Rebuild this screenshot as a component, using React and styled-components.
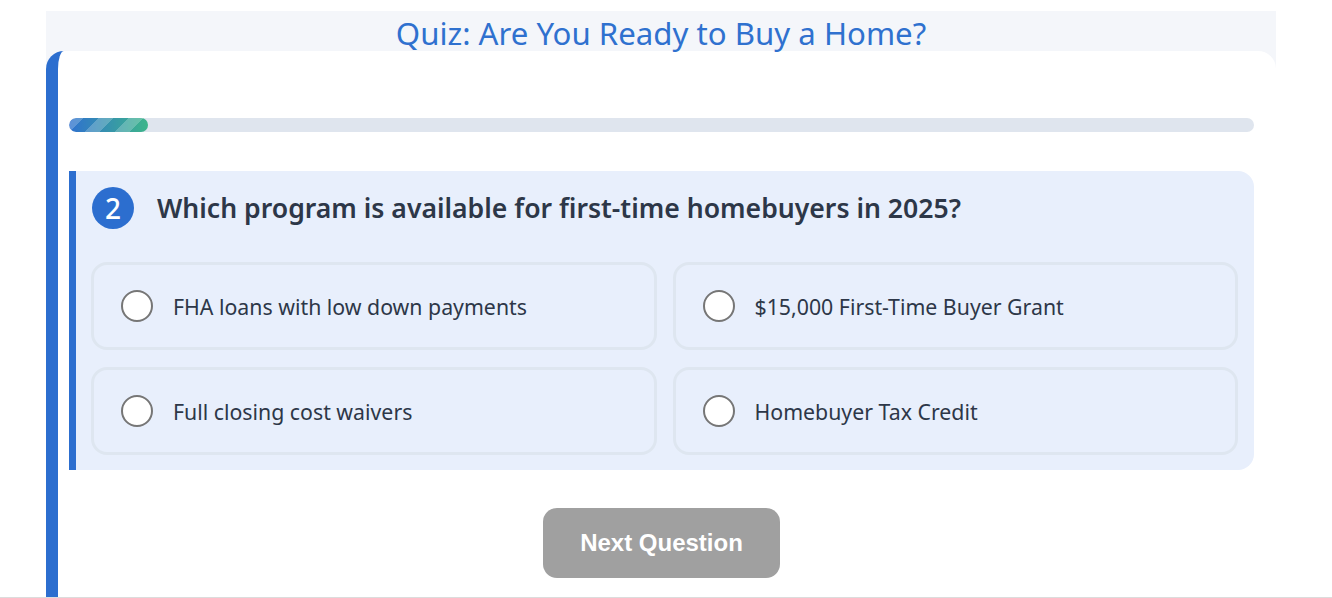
import React from "react";
import styled, { createGlobalStyle } from "styled-components";

const Global = createGlobalStyle`
  html, body { margin: 0; padding: 0; background: #ffffff; }
  body { font-family: "Noto Sans", "Open Sans", sans-serif; overflow: hidden; }
  #root {
    width: 1332px;
    height: 598px;
    border-bottom: 1px solid #dcdcdc;
    box-sizing: border-box;
    overflow: hidden;
    display: flex;
    flex-direction: column;
  }
`;

const Outer = styled.div`
  flex: 1;
  min-height: 0;
  margin: 11px 56px 0 46px;
  background: #f4f6fa;
  display: flex;
  flex-direction: column;
  overflow: hidden;
`;

const Title = styled.h1`
  margin: 0;
  height: 40px;
  flex-shrink: 0;
  text-align: center;
  font-size: 31.2px;
  font-weight: 400;
  color: #2f71cf;
  line-height: 44px;
  overflow: visible;
  position: relative;
  z-index: 1;
`;

const Card = styled.div`
  flex: 1;
  background: #ffffff;
  border-left: 12px solid #2c6ecf;
  border-radius: 18px 18px 0 0;
  padding: 67px 22px 30px 11px;
  display: flex;
  flex-direction: column;
`;

const Track = styled.div`
  height: 14px;
  border-radius: 7px;
  background: #dfe5ee;
  overflow: hidden;
`;

const Fill = styled.div`
  height: 100%;
  border-radius: 7px;
  background-image:
    linear-gradient(135deg, rgba(255,255,255,0.22) 25%, transparent 25%, transparent 50%, rgba(255,255,255,0.22) 50%, rgba(255,255,255,0.22) 75%, transparent 75%, transparent),
    linear-gradient(90deg, #2f71cf, #3db58a);
  background-size: 30px 30px, 100% 100%;
`;

const QuestionBox = styled.div`
  margin-top: 39px;
  background: #e8effc;
  border-left: 7px solid #2c6ecf;
  border-radius: 0 16px 16px 0;
  padding: 16px 16px 15px 15px;
  display: flex;
  flex-direction: column;
`;

const QuestionHead = styled.div`
  display: flex;
  align-items: center;
  gap: 23px;
  padding-left: 1px;
`;

const Badge = styled.div`
  width: 42px;
  height: 42px;
  border-radius: 50%;
  background: #2c6ecf;
  color: #ffffff;
  font-size: 28px;
  font-weight: 500;
  display: flex;
  align-items: center;
  justify-content: center;
  flex-shrink: 0;
`;

const QuestionText = styled.h2`
  margin: 0;
  font-size: 26.6px;
  font-weight: 600;
  color: #2d3748;
`;

const Options = styled.div`
  margin-top: 33px;
  display: grid;
  grid-template-columns: 1fr 1fr;
  gap: 17px 16px;
`;

const Option = styled.div`
  height: 88px;
  box-sizing: border-box;
  border: 3px solid #dee6f0;
  border-radius: 16px;
  display: flex;
  align-items: center;
  padding-left: 27px;
  gap: 20px;
  font-size: 21.3px;
  color: #2d3748;
`;

const Radio = styled.span`
  width: 32px;
  height: 32px;
  box-sizing: border-box;
  border-radius: 50%;
  border: 2px solid #767676;
  background: #ffffff;
  flex-shrink: 0;
`;

const ButtonRow = styled.div`
  margin-top: 38px;
  display: flex;
  justify-content: center;
`;

const NextButton = styled.button`
  width: 237px;
  height: 70px;
  border: none;
  border-radius: 14px;
  background: #a0a0a0;
  color: #ffffff;
  font-family: "Liberation Sans", Arial, sans-serif;
  font-weight: 700;
  font-size: 24px;
  cursor: not-allowed;
`;

const options = [
  "FHA loans with low down payments",
  "$15,000 First-Time Buyer Grant",
  "Full closing cost waivers",
  "Homebuyer Tax Credit",
];

export default function App() {
  const progress = 79 / 1185;
  return (
    <>
      <Global />
      <Outer>
        <Title>Quiz: Are You Ready to Buy a Home?</Title>
        <Card>
          <Track>
            <Fill style={{ width: `${progress * 100}%` }} />
          </Track>
          <QuestionBox>
            <QuestionHead>
              <Badge>2</Badge>
              <QuestionText>Which program is available for first-time homebuyers in 2025?</QuestionText>
            </QuestionHead>
            <Options>
              {options.map((o) => (
                <Option key={o}>
                  <Radio />
                  <span>{o}</span>
                </Option>
              ))}
            </Options>
          </QuestionBox>
          <ButtonRow>
            <NextButton disabled>Next Question</NextButton>
          </ButtonRow>
        </Card>
      </Outer>
    </>
  );
}
